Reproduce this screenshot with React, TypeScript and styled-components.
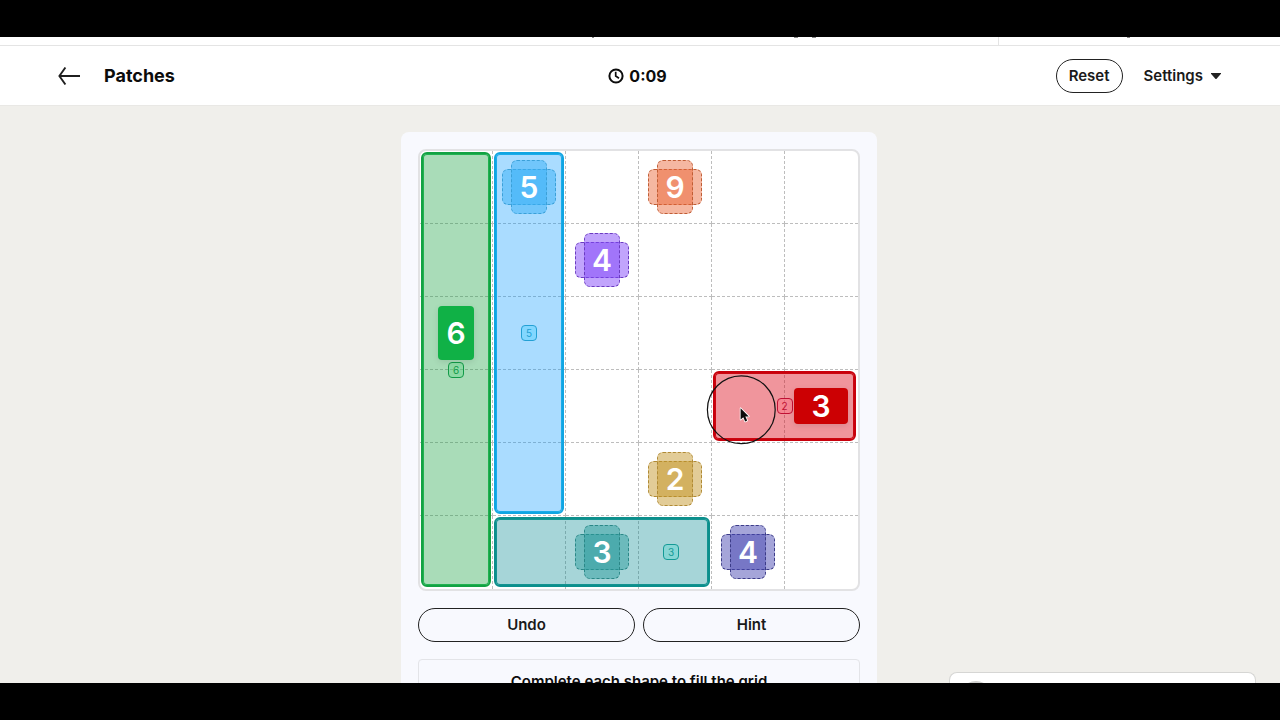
import React from "react";
import styled, { createGlobalStyle, css } from "styled-components";

const GlobalStyle = createGlobalStyle`
  * { box-sizing: border-box; }
  body {
    margin: 0;
    background: #000;
    color: #1a1a1a;
    font-family: Inter, "Liberation Sans", sans-serif;
  }
  button { font: inherit; color: inherit; cursor: pointer; }
`;

const Frame = styled.div`
  display: flex;
  height: 100vh;
  padding: 37px 0;
`;

const Screen = styled.div`
  position: relative;
  flex: 1;
  overflow: hidden;
  background: #f0efeb;
`;

const TopStrip = styled.div`
  height: 9px;
  background: #fff;
  border-bottom: 1px solid #e4e4e4;
`;

const StripMarks = styled.svg`
  display: block;
  width: 100%;
  height: 8px;
`;

const Header = styled.header`
  display: grid;
  grid-template-columns: 1fr auto 1fr;
  align-items: center;
  height: 60px;
  padding: 0 59px 0 58px;
  background: #fff;
  border-bottom: 1px solid #e9e8e5;
`;

const HeaderStart = styled.div`
  display: flex;
  align-items: center;
  gap: 24px;
`;

const HeaderEnd = styled.div`
  display: flex;
  align-items: center;
  justify-content: flex-end;
  gap: 21px;
`;

const IconButton = styled.button`
  display: flex;
  padding: 0;
  border: 0;
  background: none;
`;

const Title = styled.h1`
  margin: 0;
  padding-top: 1px;
  color: #0c0c0c;
  font-size: 18px;
  line-height: 24px;
  font-weight: 700;
`;

const Timer = styled.div`
  display: flex;
  align-items: center;
  gap: 5px;
  padding-right: 4px;
  color: #0c0c0c;
  font-size: 16px;
  line-height: 24px;
  font-weight: 700;
`;

const PillButton = styled.button<{ $grow?: boolean }>`
  height: 34px;
  padding: 0 12px;
  border: 1px solid #222;
  border-radius: 17px;
  background: transparent;
  font-size: 15px;
  line-height: 20px;
  font-weight: 600;
  ${(p) => p.$grow && css`flex: 1;`}
`;

const MenuButton = styled.button`
  display: flex;
  align-items: center;
  gap: 8px;
  padding: 0;
  border: 0;
  background: none;
  font-size: 15px;
  line-height: 20px;
  font-weight: 600;
`;

const Panel = styled.main`
  display: flex;
  flex-direction: column;
  gap: 17px;
  width: 100%;
  max-width: 476px;
  margin: 26px auto 0;
  padding: 17px;
  border-radius: 8px;
  background: #f8f9fe;
`;

const PanelArea = styled.div`
  padding-right: 2px;
`;

const Board = styled.div`
  position: relative;
  display: grid;
  grid-template-columns: repeat(6, 1fr);
  grid-template-rows: repeat(6, 1fr);
  aspect-ratio: 1;
  border: 2px solid #e2e2e4;
  border-radius: 8px;
  background: #fff;
`;

const Cell = styled.div<{ $row: number; $col: number }>`
  grid-area: ${(p) => p.$row} / ${(p) => p.$col};
  border: 0 dashed #bdbdbd;
  border-right-width: ${(p) => (p.$col < 6 ? 1 : 0)}px;
  border-bottom-width: ${(p) => (p.$row < 6 ? 1 : 0)}px;
`;

const Region = styled.div<{ $area: string; $line: string; $glow: string; $fill: string; $end?: boolean }>`
  grid-area: ${(p) => p.$area};
  display: flex;
  align-items: center;
  justify-content: ${(p) => (p.$end ? "flex-end" : "center")};
  margin: 1px 2px 2px 1px;
  padding: 0 ${(p) => (p.$end ? 29 : 0)}px;
  border: 2px solid ${(p) => p.$line};
  border-radius: 6px;
  box-shadow: inset 0 0 0 1px ${(p) => p.$glow};
  background: ${(p) => p.$fill};
`;

const Count = styled.span<{ $color: string; $fill: string }>`
  display: flex;
  align-items: center;
  justify-content: center;
  width: 16px;
  height: 16px;
  border: 1px solid ${(p) => p.$color};
  border-radius: 4px;
  background: ${(p) => p.$fill};
  color: ${(p) => p.$color};
  font-size: 10px;
  line-height: 14px;
`;

const Clue = styled.div<{ $row: number; $col: number }>`
  grid-area: ${(p) => p.$row} / ${(p) => p.$col};
  display: grid;
  place-items: center;
  margin: 0 1px 1px 0;
  color: #fff;
  font-size: 30px;
  line-height: 36px;
  font-weight: 600;
  & > * { grid-area: 1 / 1; }
`;

const Piece = styled.div<{ $tall?: boolean; $fill: string; $line?: string }>`
  width: ${(p) => (p.$tall ? 36 : 54)}px;
  height: ${(p) => (p.$tall ? 54 : 36)}px;
  border-radius: ${(p) => (p.$line ? 6 : 4)}px;
  background: ${(p) => p.$fill};
  ${(p) =>
    p.$line
      ? css`border: 1px dashed ${p.$line};`
      : css`box-shadow: 0 2px 6px rgba(0, 0, 0, 0.1);`}
`;

const Digit = styled.span`
  position: relative;
`;

const Pointer = styled.svg`
  position: absolute;
  left: 286px;
  top: 224px;
  pointer-events: none;
`;

const Actions = styled.div`
  display: flex;
  gap: 8px;
`;

const Instructions = styled.section`
  padding: 12px 16px 80px;
  border: 1px solid #e3e4e8;
  border-radius: 4px;
  text-align: center;
`;

const InstructionTitle = styled.h2`
  margin: 0;
  color: #0c0c0c;
  font-size: 15px;
  line-height: 20px;
  font-weight: 600;
`;

const MessageDock = styled.aside`
  position: absolute;
  right: 24px;
  bottom: 0;
  width: 307px;
  height: 11px;
  padding: 8px 10px 0;
  overflow: hidden;
  border: 1px solid #d6d6d4;
  border-bottom: 0;
  border-radius: 8px 8px 0 0;
  background: #fff;
`;

const Avatar = styled.div`
  width: 32px;
  height: 32px;
  border-radius: 50%;
  background: #cfcfcd;
`;

const cells = Array.from({ length: 36 }, (_, i) => ({ row: Math.floor(i / 6) + 1, col: (i % 6) + 1 }));

const regions = [
  { area: "1 / 1 / 7 / 2", line: "#12a243", glow: "#20b250", fill: "rgba(22,160,62,0.37)", count: 6, color: "#129a48", badge: "rgba(90,215,130,0.35)" },
  { area: "1 / 2 / 6 / 3", line: "#10a5e2", glow: "#1aacea", fill: "rgba(0,150,255,0.335)", count: 5, color: "#23a0d4", badge: "rgba(90,210,255,0.5)" },
  { area: "6 / 2 / 7 / 5", line: "#0c8f8c", glow: "#149391", fill: "rgba(0,136,144,0.35)", count: 3, color: "#149a96", badge: "rgba(90,215,210,0.4)", end: true },
  { area: "4 / 5 / 5 / 7", line: "#c8000c", glow: "#cc0610", fill: "rgba(221,10,25,0.43)", count: 2, color: "#c01034", badge: "rgba(255,110,130,0.4)" },
];

const clues = [
  { row: 1, col: 2, value: 5, fill: "rgba(55,175,248,0.5)", line: "#3ba0d8" },
  { row: 1, col: 4, value: 9, fill: "rgba(233,98,50,0.46)", line: "#bf5d35" },
  { row: 2, col: 3, value: 4, fill: "rgba(128,70,248,0.49)", line: "#6b3cc0" },
  { row: 5, col: 4, value: 2, fill: "rgba(193,146,35,0.47)", line: "#b08a35" },
  { row: 6, col: 3, value: 3, fill: "rgba(40,155,155,0.46)", line: "#2b8787" },
  { row: 6, col: 5, value: 4, fill: "rgba(72,72,178,0.49)", line: "#3c3c88" },
];

const placed = [
  { row: 3, col: 1, value: 6, fill: "#10b146", tall: true },
  { row: 4, col: 6, value: 3, fill: "#cc0003", tall: false },
];

export default function App() {
  return (
    <>
      <GlobalStyle />
      <Frame>
        <Screen>
          <TopStrip>
            <StripMarks viewBox="0 0 1280 8" preserveAspectRatio="none" aria-hidden="true">
              <path d="M592 .5h2M794 .5h4M812 .5h4M1127 .5h3" stroke="#888" />
              <path d="M998.5 0v8" stroke="#e4e4e4" />
            </StripMarks>
          </TopStrip>
          <Header>
            <HeaderStart>
              <IconButton aria-label="Back">
                <svg width="22" height="20" viewBox="0 0 22 20" fill="none" stroke="#1f1f1f" strokeWidth="1.9">
                  <path d="M22 10H1.5M7.4 1.5L1.4 10l6 8.5" />
                </svg>
              </IconButton>
              <Title>Patches</Title>
            </HeaderStart>
            <Timer>
              <svg width="16" height="16" viewBox="0 0 16 16" fill="none" stroke="#0c0c0c">
                <circle cx="8" cy="8" r="6.6" strokeWidth="2" />
                <path d="M7.7 3.8V8l3.3 2.2" strokeWidth="1.7" />
              </svg>
              <time>0:09</time>
            </Timer>
            <HeaderEnd>
              <PillButton>Reset</PillButton>
              <MenuButton aria-haspopup="menu">
                Settings
                <svg width="10" height="6" viewBox="0 0 10 6" fill="#222" aria-hidden="true">
                  <path d="M0 0h10v.8L5.4 6h-.8L0 .8z" />
                </svg>
              </MenuButton>
            </HeaderEnd>
          </Header>
          <PanelArea>
            <Panel>
              <Board>
                {cells.map((c) => (
                  <Cell key={`${c.row}-${c.col}`} $row={c.row} $col={c.col} />
                ))}
                {regions.map((r) => (
                  <Region key={r.area} $area={r.area} $line={r.line} $glow={r.glow} $fill={r.fill} $end={r.end}>
                    <Count $color={r.color} $fill={r.badge}>{r.count}</Count>
                  </Region>
                ))}
                {clues.map((c) => (
                  <Clue key={`${c.row}-${c.col}`} $row={c.row} $col={c.col}>
                    <Piece $fill={c.fill} $line={c.line} />
                    <Piece $tall $fill={c.fill} $line={c.line} />
                    <Digit>{c.value}</Digit>
                  </Clue>
                ))}
                {placed.map((c) => (
                  <Clue key={`${c.row}-${c.col}`} $row={c.row} $col={c.col}>
                    <Piece $tall={c.tall} $fill={c.fill} />
                    <Digit>{c.value}</Digit>
                  </Clue>
                ))}
                <Pointer width="70" height="70" viewBox="0 0 70 70" aria-hidden="true">
                  <circle cx="35.3" cy="34.7" r="33.9" fill="none" stroke="#111" strokeWidth="1.2" />
                  <path
                    d="M34.6 33.2v11.4l2.7-2.4 1.9 4.3 2-.9-1.9-4.2h3.5z"
                    fill="#0a0a0a"
                    stroke="#fff"
                    strokeWidth="1.6"
                    strokeLinejoin="round"
                    paintOrder="stroke"
                  />
                </Pointer>
              </Board>
              <Actions>
                <PillButton $grow>Undo</PillButton>
                <PillButton $grow>Hint</PillButton>
              </Actions>
              <Instructions>
                <InstructionTitle>Complete each shape to fill the grid</InstructionTitle>
              </Instructions>
            </Panel>
          </PanelArea>
          <MessageDock>
            <Avatar />
          </MessageDock>
        </Screen>
      </Frame>
    </>
  );
}
